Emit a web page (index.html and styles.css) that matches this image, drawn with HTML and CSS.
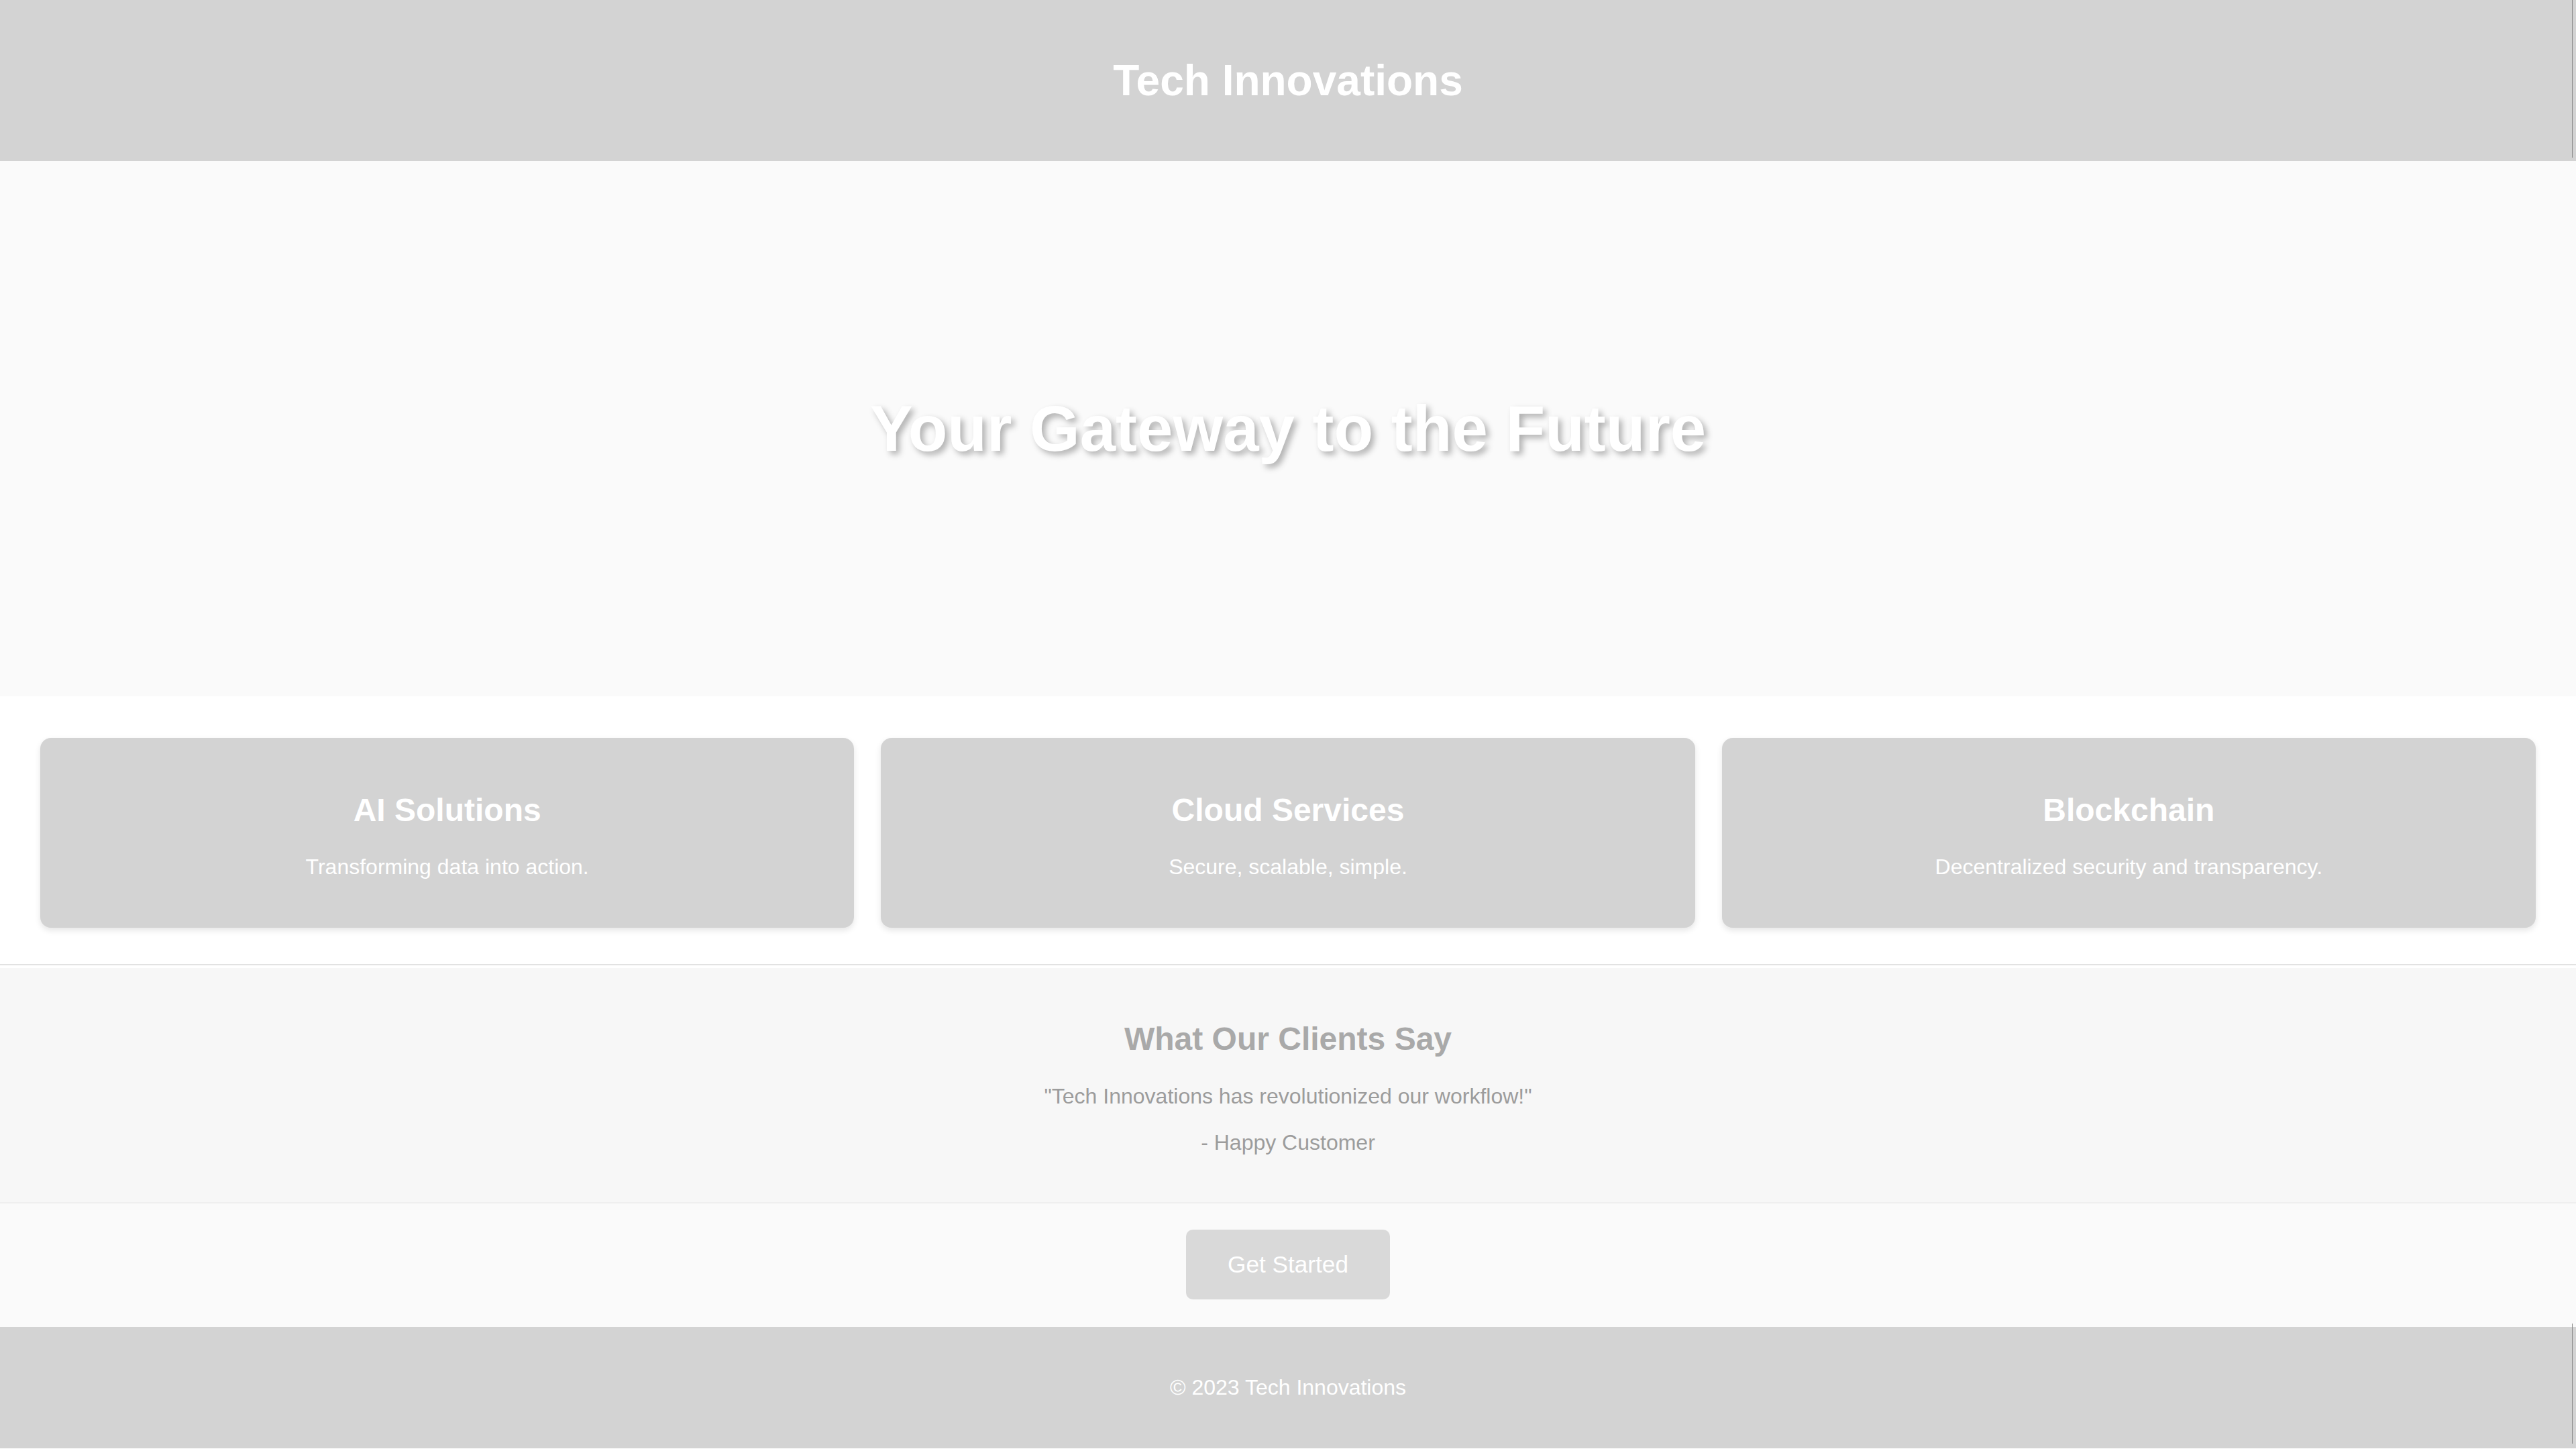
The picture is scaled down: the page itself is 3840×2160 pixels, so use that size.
FILE: index.html
```html
<!DOCTYPE html>
<html lang="en">
<head>
<meta charset="utf-8">
<title>Tech Innovations</title>
<link rel="stylesheet" href="styles.css">
</head>
<body>
<header class="site-header">
  <h1 class="brand">Tech Innovations</h1>
</header>
<section class="hero">
  <h1 class="hero-title">Your Gateway to the Future</h1>
</section>
<section class="features">
  <div class="card">
    <h2 class="card-title">AI Solutions</h2>
    <p class="card-text">Transforming data into action.</p>
  </div>
  <div class="card">
    <h2 class="card-title">Cloud Services</h2>
    <p class="card-text">Secure, scalable, simple.</p>
  </div>
  <div class="card">
    <h2 class="card-title">Blockchain</h2>
    <p class="card-text">Decentralized security and transparency.</p>
  </div>
</section>
<section class="testimonials">
  <h2 class="testimonials-title">What Our Clients Say</h2>
  <p class="quote">"Tech Innovations has revolutionized our workflow!"</p>
  <p class="quote">- Happy Customer</p>
</section>
<section class="cta">
  <button class="cta-button">Get Started</button>
</section>
<footer class="site-footer">
  <p class="footer-text">© 2023 Tech Innovations</p>
</footer>
</body>
</html>
```

FILE: styles.css
```css
html, body {
  margin: 0;
  padding: 0;
  background: #ffffff;
  font-family: "Liberation Sans", Arial, sans-serif;
}

.site-header {
  position: relative;
  background: #d3d3d3;
  color: #ffffff;
  padding: 40px;
  text-align: center;
}

.site-header::after,
.site-footer::after {
  content: "";
  position: absolute;
  right: 5px;
  width: 1px;
  background: #8a8a8a;
}

.site-header::after {
  top: 0;
  bottom: 5px;
}

.brand {
  font-size: 64px;
  font-weight: bold;
  margin: 0.67em 0;
}

.hero {
  height: 798px;
  background: #fafafa;
  display: flex;
  align-items: center;
  justify-content: center;
}

.hero-title {
  margin: 0;
  font-size: 96px;
  font-weight: bold;
  color: #ffffff;
  text-shadow: 5px 5px 10px rgba(0, 0, 0, 0.3);
}

.features {
  display: flex;
  gap: 40px;
  padding: 62px 60px 54px;
  border-bottom: 2px solid #e2e2e2;
  margin-bottom: 4px;
}

.card {
  flex: 1;
  background: #d3d3d3;
  border-radius: 16px;
  padding: 40px;
  text-align: center;
  color: #ffffff;
  box-shadow: 0 4px 10px rgba(0, 0, 0, 0.1);
}

.card-title {
  font-size: 48px;
  margin: 0.83em 0;
}

.card-text {
  font-size: 32px;
  margin: 32px 0;
}

.testimonials {
  background: #f7f7f7;
  padding: 38px 40px;
  text-align: center;
  border-bottom: 2px solid #efefef;
}

.testimonials-title {
  font-size: 48px;
  margin: 0.83em 0;
  color: #a9a9a9;
}

.quote {
  font-size: 32px;
  margin: 32px 0;
  color: #9c9c9c;
}

.cta {
  background: #fafafa;
  padding: 39px 40px 41px;
  text-align: center;
}

.cta-button {
  font-family: "Liberation Sans", Arial, sans-serif;
  font-size: 35.2px;
  color: #ffffff;
  background: #d9d9d9;
  border: 2px solid #d9d9d9;
  border-radius: 10px;
  padding: 30px 60px;
  cursor: pointer;
}

.site-footer {
  position: relative;
  background: #d3d3d3;
  color: #ffffff;
  padding: 40px;
  text-align: center;
}

.site-footer::after {
  top: -5px;
  bottom: 7px;
}

.footer-text {
  font-size: 32px;
  margin: 32px 0;
}
```
